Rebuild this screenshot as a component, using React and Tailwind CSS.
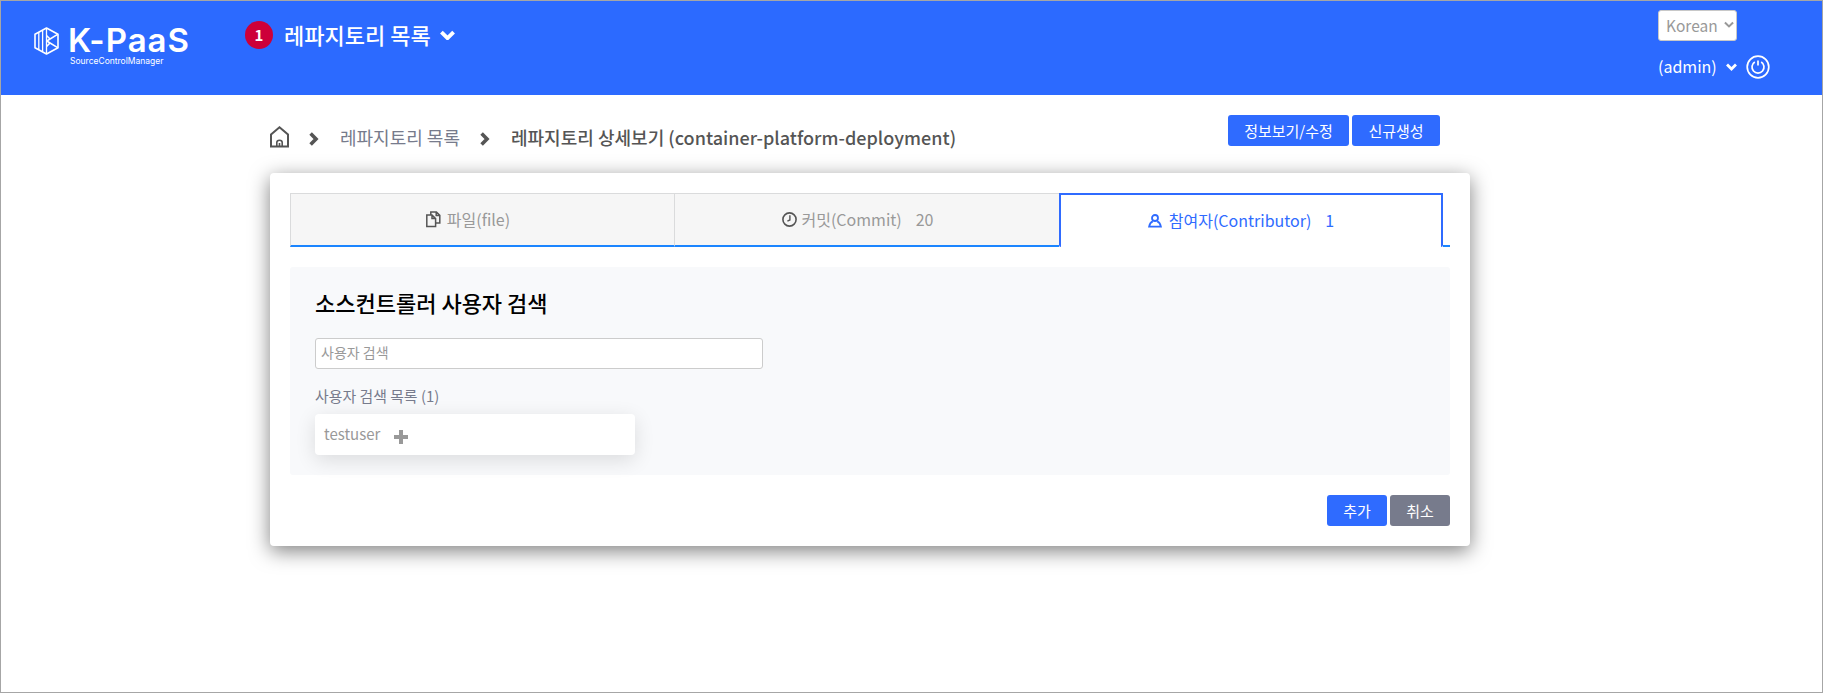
import React from 'react';

function Logo() {
  return (
    <div className="flex w-[160px] pt-[21px]">
      <svg width="25" height="28" viewBox="0 0 25 28" className="mt-[5px]" fill="none" stroke="#fff" strokeWidth="1.6" strokeLinejoin="round">
        <path d="M12.5 1 L24 7.2 V20.8 L12.5 27 L1 20.8 V7.2 Z" />
        <path d="M12.5 1 V27 M8.6 3.6 V24.4 M4.8 5.6 V22.4" strokeWidth="1.3" />
        <path d="M23.6 7.4 L12.8 14 L23.6 20.6 M16 12 L12.5 8.5 M16 16 L12.5 19.5" />
      </svg>
      <div className="ml-[9px]">
        <div className="text-[33px] leading-[36px] font-semibold whitespace-nowrap tracking-[1px] font-[Inter,sans-serif]">K-PaaS</div>
        <div className="mt-[-3px] ml-[2px] text-[8.5px] leading-[12px] whitespace-nowrap font-[Inter,sans-serif]">SourceControlManager</div>
      </div>
    </div>
  );
}

function Chevron({ w, sw, className }) {
  return (
    <svg width={w} height={(w * 10) / 14} viewBox="0 0 14 10" fill="none" stroke="currentColor" strokeWidth={sw} className={className}>
      <path d="M1.3 2 L7 7.6 L12.7 2" />
    </svg>
  );
}

function Arrow({ className }) {
  return (
    <svg width="10" height="14" viewBox="0 0 10 14" fill="none" stroke="#555" strokeWidth="3.6" className={className}>
      <path d="M1.6 1.6 L7 7 L1.6 12.4" />
    </svg>
  );
}

function Button({ children, className }) {
  return (
    <button className={`h-[31px] rounded-[3px] text-[15px] leading-[31px] text-white ${className}`}>{children}</button>
  );
}

function Header() {
  return (
    <header className="flex h-[94px] bg-[#2c6aff] pl-[33px] text-white">
      <Logo />
      <div className="ml-[51px] flex h-[68px] items-center">
        <span className="flex h-7 w-7 items-center justify-center rounded-full bg-[#cd0039] text-[15px] font-bold">1</span>
        <span className="ml-[11px] pb-[2px] text-[22px] font-medium whitespace-nowrap">레파지토리 목록</span>
        <Chevron w={15} sw={3.6} className="ml-[9px]" />
      </div>
      <div className="mr-[51px] ml-auto w-[113px] pt-[9px]">
        <div className="flex h-[31px] w-[79px] items-center rounded-[3px] border border-[#c8c8c8] bg-white pl-[7px] text-[15.5px] text-[#999]">
          Korean
          <Chevron w={10} sw={2.8} className="mt-[-2px] ml-[6px]" />
        </div>
        <div className="mt-[8px] flex h-[36px] items-center text-[16px]">
          <span className="w-[59px] pb-[2px] whitespace-nowrap">(admin)</span>
          <Chevron w={11} sw={3.6} className="ml-[9px]" />
          <svg width="24" height="24" viewBox="0 0 24 24" fill="none" stroke="#fff" className="ml-[9px]">
            <circle cx="12" cy="12" r="10.8" strokeWidth="1.7" />
            <path d="M8.8 7 A6 6 0 1 0 15.2 7 M12 5.4 V10.4" strokeWidth="1.7" />
          </svg>
        </div>
      </div>
    </header>
  );
}

function Breadcrumb() {
  return (
    <div className="flex h-[78px] w-[1170px] pt-[19px] text-[18px]">
      <div className="flex h-[46px] items-center">
        <svg width="19" height="22" viewBox="0 0 19 22" fill="none" stroke="#555" strokeWidth="2">
          <path d="M1 8.5 L9.5 1.3 L18 8.5 V20.5 H1 Z" />
          <path d="M6.8 20.5 V16.6 Q6.8 14.2 9.5 14.2 Q12.2 14.2 12.2 16.6 V20.5 M9.5 20 V17" strokeWidth="1.6" />
        </svg>
        <Arrow className="mt-[4px] ml-[20px]" />
        <span className="ml-[21px] text-[#777b8c]">레파지토리 목록</span>
        <Arrow className="mt-[4px] ml-[20px]" />
        <span className="ml-[21px] font-medium tracking-[0.02px] whitespace-nowrap text-[#555]">레파지토리 상세보기 (container-platform-deployment)</span>
      </div>
      <div className="mt-px ml-auto flex gap-[3px]">
        <Button className="w-[121px] bg-[#2f6bff]">정보보기/수정</Button>
        <Button className="w-[88px] bg-[#2f6bff]">신규생성</Button>
      </div>
    </div>
  );
}

function Tabs() {
  return (
    <div className="flex h-[54px] text-[16px] text-[#999]">
      <div className="flex w-[384px] items-center justify-center border-t border-b-2 border-l border-t-[#dadbdc] border-b-[#1b85ff] border-l-[#dadbdc] bg-[#f6f6f6] pr-[29px] pb-[2px]">
        <svg width="15" height="17" viewBox="0 0 15 17" fill="none" stroke="#555" strokeWidth="1.5" className="mt-px mr-[6px]">
          <path d="M0.8 4 H6 L9.6 7.6 V15.6 H0.8 Z M6 4 V7.6 H9.6" />
          <path d="M4.8 4 V1 H10.4 L13.8 4.4 V12 H9.6 M10.2 1 V4.6 H13.8" />
        </svg>
        파일(file)
      </div>
      <div className="flex w-[385px] items-center justify-center border-t border-b-2 border-l border-t-[#dadbdc] border-b-[#1b85ff] border-l-[#dadbdc] bg-[#f6f6f6] pr-[19px] pb-[2px]">
        <svg width="15" height="15" viewBox="0 0 15 15" fill="none" stroke="#555" strokeWidth="1.6" className="mt-px mr-[5px]">
          <circle cx="7.5" cy="7.5" r="6.6" />
          <path d="M7.9 3.2 V8 L5.4 9.2" strokeWidth="1.4" />
        </svg>
        커밋(Commit)<span className="ml-[14px]">20</span>
      </div>
      <div className="flex w-[384px] items-center justify-center rounded-b-[2px] border-x-2 border-t-2 border-[#2f6bff] bg-white pr-[20px] pb-[2px] text-[#2f6bff]">
        <svg width="14" height="14" viewBox="0 0 14 14" fill="none" stroke="#2f6bff" strokeWidth="1.8" className="mt-px mr-[7px]">
          <circle cx="7" cy="4" r="3" />
          <path d="M4.8 7.4 Q2 8.4 1.1 12.6 H12.9 Q12 8.4 9.2 7.4" />
        </svg>
        참여자(Contributor)<span className="ml-[14px]">1</span>
      </div>
      <div className="flex-1 border-b-2 border-[#1b85ff]" />
    </div>
  );
}

export default function App() {
  return (
    <div className="h-[693px] w-[1823px] overflow-hidden border border-[#a6a6a6] bg-white font-['Noto_Sans_CJK_KR',sans-serif]">
      <Header />
      <main className="ml-[269px] w-[1200px]">
        <Breadcrumb />
        <section className="h-[373px] rounded-[4px] bg-white p-5 shadow-[0_5px_20px_rgba(0,0,0,0.5)]">
          <Tabs />
          <div className="mt-5 h-[208px] rounded-[3px] bg-[#f8f9fb] px-[25px] pt-[19px]">
            <h2 className="text-[22px] leading-[32px] font-medium text-black">소스컨트롤러 사용자 검색</h2>
            <input
              className="mt-[20px] block h-[31px] w-[448px] rounded-[3px] border border-[#ccc] bg-white px-[5px] pb-[3px] text-[14px] text-[#999] placeholder:text-[#999]"
              placeholder="사용자 검색"
            />
            <div className="mt-[16px] text-[14.9px] leading-[22px] text-[#777b8c]">사용자 검색 목록 (1)</div>
            <div className="mt-[7px] flex h-[41px] w-[320px] items-center rounded-[4px] bg-white pl-[9px] text-[15px] text-[#999] shadow-[0_5px_20px_rgba(0,0,0,0.12)]">
              testuser
              <svg width="14" height="14" viewBox="0 0 14 14" fill="#999" className="mt-[5px] ml-[14px]">
                <path d="M5 0 H9 V5 H14 V9 H9 V14 H5 V9 H0 V5 H5 Z" />
              </svg>
            </div>
          </div>
          <div className="mt-5 flex justify-end gap-[3px]">
            <Button className="w-[60px] bg-[#2f6bff]">추가</Button>
            <Button className="w-[60px] bg-[#777b8c]">취소</Button>
          </div>
        </section>
      </main>
    </div>
  );
}
